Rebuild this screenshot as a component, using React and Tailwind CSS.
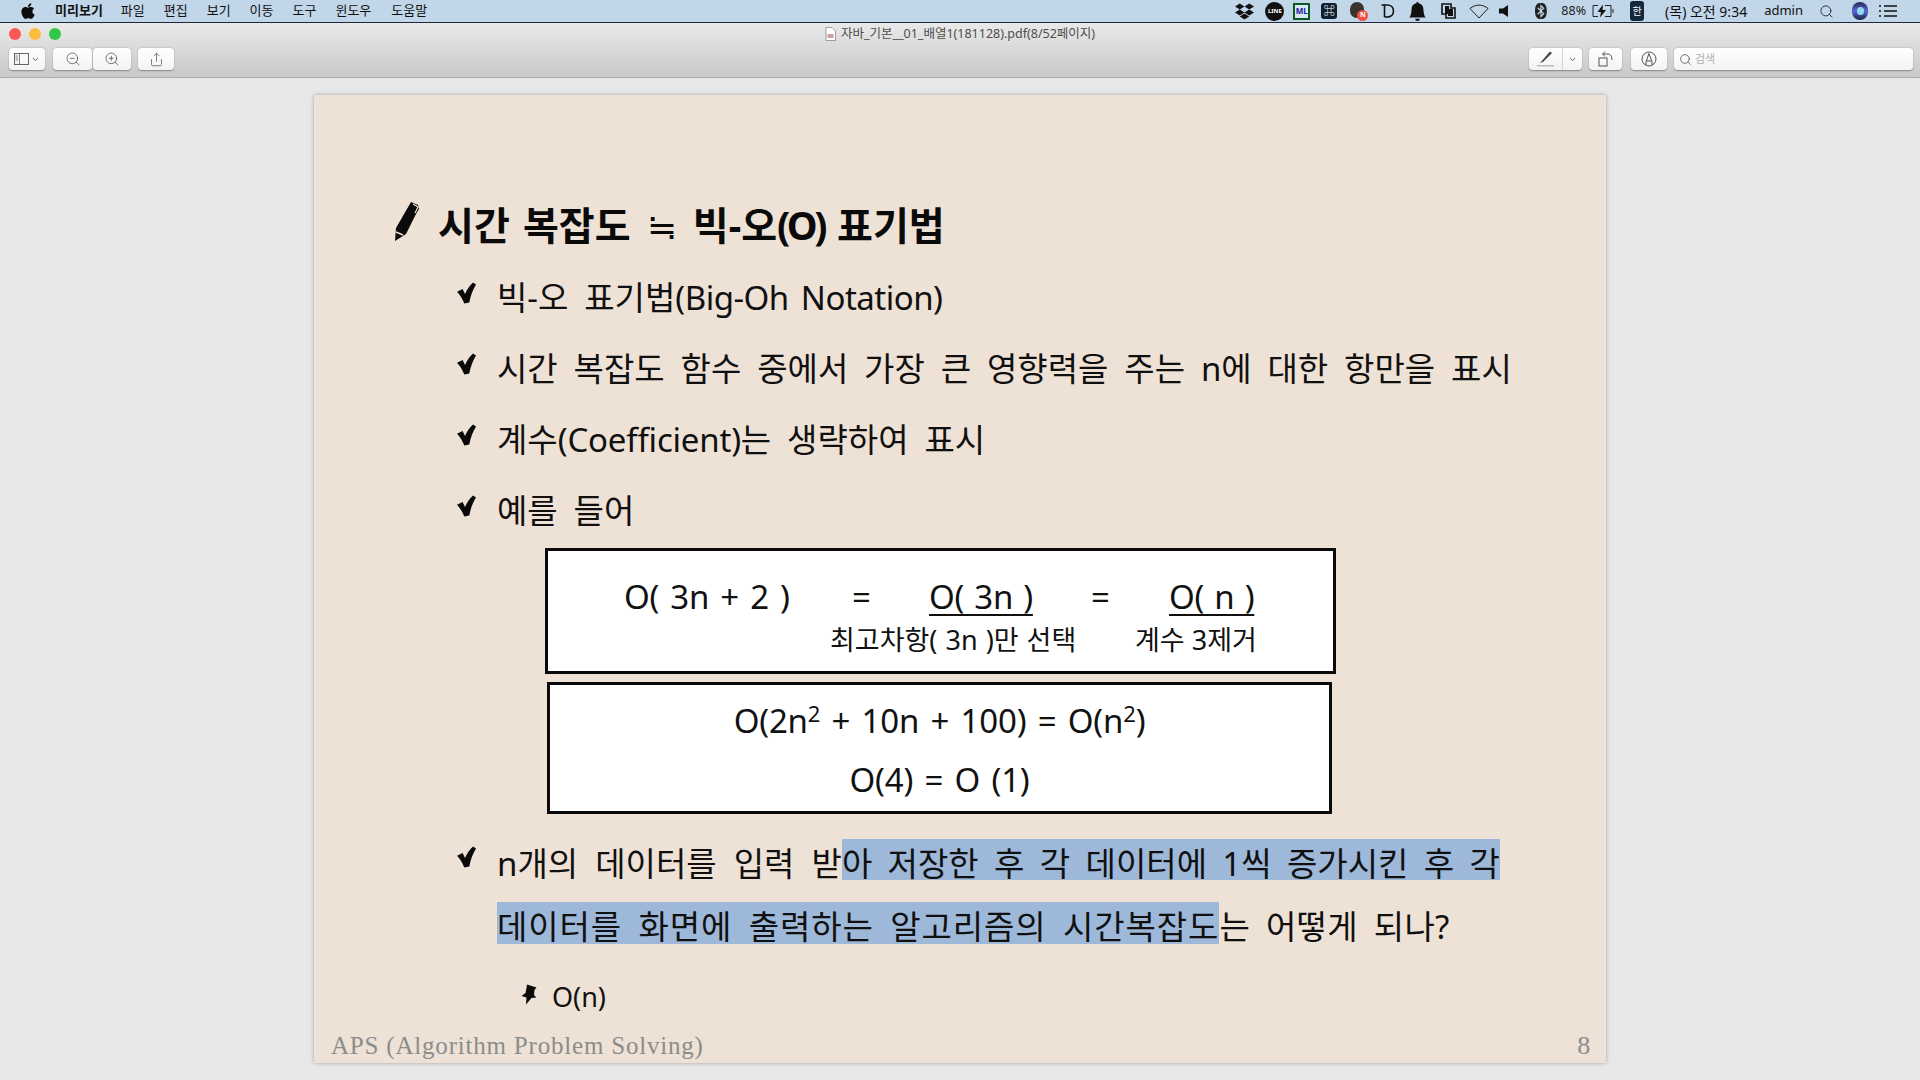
import React from 'react';
import { FaApple, FaDropbox } from 'react-icons/fa';
import { BsBellFill, BsBluetooth } from 'react-icons/bs';
import { ChevronDown, Search, ZoomIn, ZoomOut, Share } from 'lucide-react';

const KO = "font-['Noto_Sans','Noto_Sans_CJK_KR',sans-serif]";

const Check = () => (
    <svg width="19" height="22" viewBox="0 0 19 21" className="shrink-0 mt-[7px]">
        <path d="M0 9.3 L5.6 6.6 L8 11.5 C10 7 12.5 3 16 0 L19 2 C16 7 13.5 13 12.3 20 L7.3 21 C5.5 16.5 3 12.5 0 9.3 Z" fill="#0a0a0a" />
    </svg>
);

const Pencil = () => (
    <svg width="26" height="41" viewBox="0 0 26 41">
        <path d="M17 1 L24 4 L25 8 L22 13 L12 33 L1 40 L2 27 Z" fill="#0a0a0a" />
        <path d="M19 3 L24 6 L21 12" stroke="#eee1d5" strokeWidth="1.2" fill="none" />
        <path d="M2 31 L9 34" stroke="#eee1d5" strokeWidth="1.4" />
    </svg>
);

const Pin = () => (
    <svg width="16" height="21" viewBox="0 0 16 21" className="mt-[-6px]">
        <path d="M6 0.5 L15.5 3.5 L13.5 6 L13 11 L15.5 13.5 L10.5 14 L5 20.5 L5.5 13.5 L0.5 12 L4.5 9 L5.5 4 Z" fill="#0a0a0a" />
    </svg>
);

const Bullet = ({ className, textClass = '[word-spacing:7.3px]', children }) => (
    <div className={`flex items-start pl-[143px] ${className}`}>
        <Check />
        <div className={`ml-[21px] text-[33px] leading-[46px] text-[#101010] whitespace-nowrap ${textClass}`}>{children}</div>
    </div>
);

const ToolBtn = ({ className, children }) => (
    <div className={`h-[22px] flex items-center justify-center bg-gradient-to-b from-white to-[#f3f3f3] rounded-[4px] shadow-[0_0.5px_1.5px_rgba(0,0,0,0.35)] text-[#555] ${className}`}>
        {children}
    </div>
);

const MenuBar = () => (
    <div className={`h-[23px] shrink-0 flex items-center bg-[#c1d6e8] text-[13px] text-[#111] border-b border-[#1c2b3c] ${KO}`}>
        <FaApple className="ml-[19px] text-[18px] text-[#0c0c0c]" />
        <span className="ml-[18px] font-bold">미리보기</span>
        <span className="ml-[18px]">파일</span>
        <span className="ml-[19px]">편집</span>
        <span className="ml-[19px]">보기</span>
        <span className="ml-[19px]">이동</span>
        <span className="ml-[19px]">도구</span>
        <span className="ml-[19px]">윈도우</span>
        <span className="ml-[20px]">도움말</span>

        <div className="ml-auto flex items-center h-full">
            <FaDropbox className="text-[19px] text-[#111]" />
            <div className="ml-[11px] w-[19px] h-[19px] rounded-full bg-[#111] flex items-center justify-center text-[6px] font-bold text-white">LINE</div>
            <div className="ml-[9px] w-[17px] h-[17px] border-2 border-[#0d5a1f] bg-[#d9e8f2] flex items-center justify-center text-[8px] font-bold text-[#1a1aa8]">ML</div>
            <div className="ml-[11px] w-[16px] h-[16px] rounded-[3px] bg-[#10202e] flex items-center justify-center text-[11px] text-white">⌘</div>
            <div className="relative ml-[13px] w-[17px] h-[18px]">
                <div className="w-[14px] h-[16px] rounded-full bg-[#3a3330]" />
                <div className="absolute right-[-1px] bottom-[-1px] w-[11px] h-[11px] rounded-full bg-[#f2533f] flex items-center justify-center text-[7px] font-bold text-white">N</div>
            </div>
            <svg width="15" height="16" viewBox="0 0 15 16" className="ml-[13px]">
                <path d="M1.5 2 H7 C11 2 13.5 4.5 13.5 8 C13.5 11.5 11 14 7 14 H4.5 M4.5 2 V14" stroke="#111" strokeWidth="1.6" fill="none" />
            </svg>
            <BsBellFill className="ml-[13px] text-[19px] text-[#111]" />
            <svg width="15" height="16" viewBox="0 0 15 16" className="ml-[14px]">
                <path d="M1 1 H10 V5 H14 V15 H5 V11 H1 Z" fill="none" stroke="#111" strokeWidth="1.6" />
                <path d="M4 3 H8 V11 H4 Z M7 6 H12 V13 H7 Z" fill="#111" />
            </svg>
            <svg width="20" height="16" viewBox="0 0 20 16" className="ml-[13px]">
                <path d="M1 5.5 C6 1 14 1 19 5.5 L10 15 Z" fill="none" stroke="#222" strokeWidth="1" />
            </svg>
            <svg width="10" height="14" viewBox="0 0 10 14" className="ml-[10px]">
                <path d="M0 4.5 H4 L9 1 V13 L4 9.5 H0 Z" fill="#111" />
            </svg>
            <BsBluetooth className="ml-[24px] text-[16px] text-[#222]" />
            <span className="ml-[12px] text-[12.5px] text-[#222]">88%</span>
            <svg width="23" height="14" viewBox="0 0 23 14" className="ml-[5px]">
                <path d="M7 1.5 H2 V12.5 H7 M14 1.5 H20 V12.5 H14 M22 5 V9" stroke="#222" strokeWidth="1" fill="none" />
                <path d="M12 0.5 L6.5 8 H10 L9 13.5 L15 6 H11.5 Z" fill="#111" />
            </svg>
            <div className="ml-[16px] w-[14px] h-[20px] rounded-[3px] bg-[#15273a] flex items-center justify-center text-[10px] text-white">한</div>
            <span className="ml-[21px] text-[14px]">(목) 오전 9:34</span>
            <span className="ml-[17px] text-[13px]">admin</span>
            <Search className="ml-[16px] text-[#222]" size={15} strokeWidth={1.4} />
            <div className="ml-[18px] w-[16px] h-[18px] rounded-full bg-gradient-to-b from-[#232a55] via-[#5f64d8] to-[#1d2540] flex items-center justify-center">
                <div className="w-[7px] h-[8px] rounded-full bg-[#8fd6ef]" />
            </div>
            <svg width="18" height="12" viewBox="0 0 18 12" className="ml-[11px] mr-[23px]">
                <path d="M0 1 H2 M5 1 H18 M0 6 H2 M5 6 H18 M0 11 H2 M5 11 H18" stroke="#111" strokeWidth="1.6" />
            </svg>
        </div>
    </div>
);

const Toolbar = () => (
    <div className={`relative h-[55px] shrink-0 rounded-t-[5px] bg-gradient-to-b from-[#e9e9e9] to-[#c9c9c9] border-b border-[#aeaeae] ${KO}`}>
        {/* traffic lights */}
        <div className="absolute left-[9px] top-[5px] flex gap-[8px]">
            <div className="w-[12px] h-[12px] rounded-full bg-[#fc5753]" />
            <div className="w-[12px] h-[12px] rounded-full bg-[#fdbc40]" />
            <div className="w-[12px] h-[12px] rounded-full bg-[#33c748]" />
        </div>
        <div className="absolute left-0 right-0 top-[2px] flex items-center justify-center text-[12.5px] text-[#4d4d4d]">
            <svg width="11" height="14" viewBox="0 0 11 14" className="mr-[5px]">
                <path d="M1 0.5 H7 L10.5 4 V13.5 H1 Z" fill="#fff" stroke="#888" strokeWidth="0.8" />
                <rect x="2.5" y="7" width="6" height="4" fill="#c9a0a0" />
            </svg>
            자바_기본__01_배열1(181128).pdf(8/52페이지)
        </div>
        <div className="absolute left-[9px] right-[7px] top-[25px] flex items-center">
            <ToolBtn className="w-[36px] gap-[2px]">
                <svg width="15" height="12" viewBox="0 0 15 12">
                    <rect x="0.5" y="0.5" width="14" height="11" fill="none" stroke="#666" />
                    <path d="M5.5 0.5 V11.5 M1.5 3 H4 M1.5 5 H4 M1.5 7 H4" stroke="#666" strokeWidth="0.8" />
                </svg>
                <ChevronDown size={9} strokeWidth={2.5} />
            </ToolBtn>
            <ToolBtn className="ml-[8px] w-[39px]"><ZoomOut size={16} strokeWidth={1.2} /></ToolBtn>
            <ToolBtn className="ml-[1px] w-[38px]"><ZoomIn size={16} strokeWidth={1.2} /></ToolBtn>
            <ToolBtn className="ml-[7px] w-[36px]"><Share size={15} strokeWidth={1.2} /></ToolBtn>

            <ToolBtn className="ml-auto w-[53px]">
                <div className="flex-1 flex justify-center border-r border-[#d4d4d4] h-full items-center">
                    <svg width="17" height="16" viewBox="0 0 17 16">
                        <path d="M13 0.5 L15 2 L6 11 L3 12 Z" fill="#444" />
                        <rect x="0" y="14" width="17" height="1.5" fill="#bbb" />
                    </svg>
                </div>
                <div className="w-[19px] flex justify-center"><ChevronDown size={9} strokeWidth={2.5} /></div>
            </ToolBtn>
            <ToolBtn className="ml-[7px] w-[33px]">
                <svg width="16" height="16" viewBox="0 0 16 16">
                    <rect x="1" y="7" width="8" height="8" fill="none" stroke="#555" />
                    <path d="M5 3 H10 C13 3 14 6 14 9 M7 0.5 L4.5 3 L7 5.5" fill="none" stroke="#555" />
                </svg>
            </ToolBtn>
            <ToolBtn className="ml-[9px] w-[36px]">
                <svg width="16" height="16" viewBox="0 0 16 16">
                    <circle cx="8" cy="8" r="7" fill="none" stroke="#555" />
                    <path d="M8 2.5 L5 11 V14 M8 2.5 L11 11 V14 M6 10 H10" fill="none" stroke="#555" />
                </svg>
            </ToolBtn>
            <ToolBtn className="ml-[7px] w-[239px] !justify-start pl-[5px] text-[11px] text-[#b0b0b0]">
                <Search size={13} strokeWidth={1.5} className="text-[#555] mr-[3px]" />
                검색
            </ToolBtn>
        </div>
    </div>
);

const FormulaBoxes = () => (
    <div className="ml-[231px] mt-[14px] text-[#111] whitespace-nowrap">
        <div className="w-[791px] h-[126px] border-[3px] border-[#0a0a0a] bg-white pt-[23px] text-[33px] leading-[46px]">
            <div className="flex">
                <span className="ml-[76px] w-[228px] tracking-[-0.3px] [word-spacing:3px]">O( 3n + 2 )</span>
                <span className="w-[77px]">=</span>
                <span className="w-[162px]">
                    <span className="underline underline-offset-[5px] decoration-2 [word-spacing:2px] tracking-[-0.3px]">O( 3n )</span>
                </span>
                <span className="w-[78px]">=</span>
                <span className="underline underline-offset-[5px] decoration-2 [word-spacing:2px] tracking-[-0.3px]">O( n )</span>
            </div>
            <div className="flex text-[27px] leading-[36px] mt-[2px]">
                <span className="ml-[282px] w-[305px] [word-spacing:1px]">최고차항( 3n )만 선택</span>
                <span>계수 3제거</span>
            </div>
        </div>
        <div className="w-[785px] h-[132px] ml-[2px] mt-[8px] border-[3px] border-[#0a0a0a] bg-white text-center text-[33px] leading-[46px] pt-[13px] [word-spacing:3px] tracking-[-0.2px]">
            <div>O(2n<sup className="text-[22px]">2</sup> + 10n + 100) = O(n<sup className="text-[22px]">2</sup>)</div>
            <div className="mt-[13px]">O(4) = O (1)</div>
        </div>
    </div>
);

const Slide = () => (
    <div className={`w-[1292px] h-[968px] ml-[314px] mt-[17px] bg-[#eee1d5] shadow-[0_0_4px_rgba(0,0,0,0.3)] flex flex-col ${KO}`}>
        <div className="flex items-start pl-[80px] pt-[106px]">
            <Pencil />
            <div className="ml-[18px] mt-[-1px] text-[39px] leading-[50px] font-bold text-[#0a0a0a] whitespace-nowrap [word-spacing:3px]">시간 복잡도 <span className="font-normal text-[36px] mx-[3px]">≒</span> 빅-오<span className="tracking-[-3.5px]">(O)</span> 표기법</div>
        </div>

        <Bullet className="mt-[23px]">빅-오 표기법<span className="tracking-[-0.5px] [word-spacing:4px]">(Big-Oh Notation)</span></Bullet>
        <Bullet className="mt-[25px]">시간 복잡도 함수 중에서 가장 큰 영향력을 주는 n에 대한 항만을 표시</Bullet>
        <Bullet className="mt-[25px]">계수<span className="tracking-[-0.2px]">(Coefficient)</span>는 생략하여 표시</Bullet>
        <Bullet className="mt-[25px]">예를 들어</Bullet>

        <FormulaBoxes />

        <Bullet className="mt-[25px]" textClass="[word-spacing:8.5px]">
            n개의 데이터를 입력 받<span className="inline-block bg-[#9db8d8] h-[41px] leading-[49px] [word-spacing:6.8px]">아 저장한 후 각 데이터에 1씩 증가시킨 후 각</span>
        </Bullet>
        <div className="ml-[183px] mt-[15px] text-[33px] leading-[42px] text-[#101010] [word-spacing:7px] whitespace-nowrap">
            <span className="inline-block bg-[#9db8d8] h-[42px] leading-[50px] tracking-[0.9px]">데이터를 화면에 출력하는 알고리즘의 시간복잡도</span><span className="tracking-[0.3px]">는 어떻게 되나?</span>
        </div>

        <div className="flex items-center ml-[207px] mt-[30px]">
            <Pin />
            <span className="ml-[15px] text-[27px] leading-[38px] text-[#101010]">O(n)</span>
        </div>

        <div className="mt-auto mb-[1px] pl-[17px] pr-[15px] flex justify-between items-end font-['Liberation_Serif',serif] text-[#8c8c8c] text-[25px] leading-[32px] tracking-[0.8px]">
            <span>APS (Algorithm Problem Solving)</span>
            <span className="text-[26px]">8</span>
        </div>
    </div>
);

export default function App() {
    return (
        <div className="w-[1920px] h-[1080px] overflow-hidden flex flex-col bg-[#e8e8e8]">
            <MenuBar />
            <Toolbar />
            <Slide />
        </div>
    );
}
